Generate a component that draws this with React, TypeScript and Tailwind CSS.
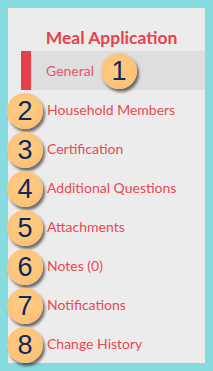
import React from "react";

const items = [
  "Household Members",
  "Certification",
  "Additional Questions",
  "Attachments",
  "Notes (0)",
  "Notifications",
  "Change History",
];

function Badge({ n }: { n: number }) {
  return (
    <div
      className="w-[36px] h-[36px] rounded-full flex items-center justify-center shadow-[2px_3px_3px_rgba(0,0,0,0.55)] bg-[radial-gradient(circle_at_45%_40%,#ffcb85_0%,#fdc47a_60%,#f2b365_100%)]"
      style={{ fontFamily: "'Liberation Sans', Arial, sans-serif" }}
    >
      <span className="text-[27px] leading-none text-[#0d2a5c]">{n}</span>
    </div>
  );
}

export default function App() {
  return (
    <div className="w-[213px] h-[371px] bg-[#86dbdf] pt-[8px] pl-[8px] pr-[8px]">
      <div
        className="w-[197px] h-[355px] bg-[#ececec] flex flex-col"
        style={{ fontFamily: "Lato, 'Liberation Sans', sans-serif" }}
      >
        <div className="h-[43px] flex items-end justify-center pl-[10px] pb-[5px]">
          <span className="text-[17.5px] font-bold text-[#e8424b] leading-none">Meal Application</span>
        </div>
        <div className="h-[39px] flex items-center bg-[#dedede] ml-[13px]">
          <div className="w-[10px] h-full bg-[#e8404a]" />
          <span className="ml-[15px] text-[14px] text-[#e85560]">General</span>
          <div className="ml-[7px] mt-[1px]">
            <Badge n={1} />
          </div>
        </div>
        {items.map((t, i) => (
          <div key={t} className="relative h-[39px] flex items-center pl-[39px]">
            <div className="absolute left-[-1px] top-[3px]">
              <Badge n={i + 2} />
            </div>
            <span className="text-[14px] text-[#ea4853]">{t}</span>
          </div>
        ))}
      </div>
    </div>
  );
}
